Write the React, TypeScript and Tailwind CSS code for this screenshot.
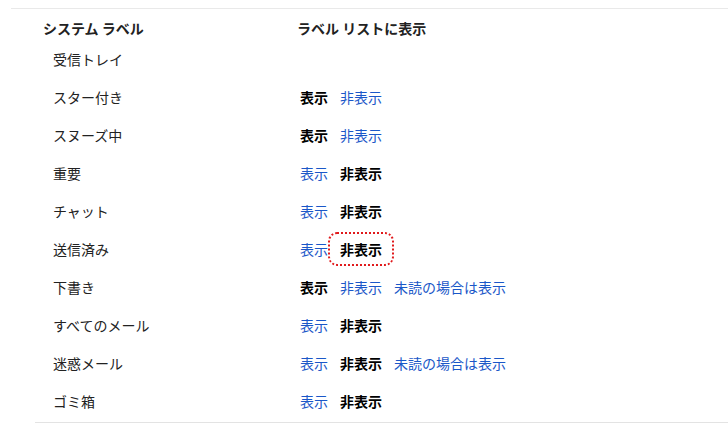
import React from 'react';

type Opt = { text: string; active: boolean; focus?: boolean };

const rows: { label: string; opts: Opt[] }[] = [
  { label: '受信トレイ', opts: [] },
  { label: 'スター付き', opts: [{ text: '表示', active: true }, { text: '非表示', active: false }] },
  { label: 'スヌーズ中', opts: [{ text: '表示', active: true }, { text: '非表示', active: false }] },
  { label: '重要', opts: [{ text: '表示', active: false }, { text: '非表示', active: true }] },
  { label: 'チャット', opts: [{ text: '表示', active: false }, { text: '非表示', active: true }] },
  { label: '送信済み', opts: [{ text: '表示', active: false }, { text: '非表示', active: true, focus: true }] },
  {
    label: '下書き',
    opts: [
      { text: '表示', active: true },
      { text: '非表示', active: false },
      { text: '未読の場合は表示', active: false },
    ],
  },
  { label: 'すべてのメール', opts: [{ text: '表示', active: false }, { text: '非表示', active: true }] },
  {
    label: '迷惑メール',
    opts: [
      { text: '表示', active: false },
      { text: '非表示', active: true },
      { text: '未読の場合は表示', active: false },
    ],
  },
  { label: 'ゴミ箱', opts: [{ text: '表示', active: false }, { text: '非表示', active: true }] },
];

export default function App() {
  return (
    <div
      className="w-[728px] h-[430px] bg-white pt-[8px] pl-[11px] text-[14px] leading-[16px] text-[#222]"
      style={{ fontFamily: '"Noto Sans CJK JP", "Liberation Sans", sans-serif' }}
    >
      <div className="border-t border-[#e9e9e9]">
        <div className="pl-[24px]">
          <div className="border-b border-[#e3e3e3] pb-[2px]">
            <div className="flex pt-[11px] pb-[4px] font-bold">
              <div className="w-[262px] pl-[8px]">システム ラベル</div>
              <div>ラベル リストに表示</div>
            </div>
            {rows.map((row, i) => (
              <div key={i} className="flex items-center h-[38px]">
                <div className="w-[265px] pl-[18px]">{row.label}</div>
                <div className="flex items-center gap-[12px]">
                  {row.opts.map((o, j) =>
                    o.active ? (
                      <span
                        key={j}
                        className={
                          o.focus
                            ? 'font-bold text-black -mx-[10px] px-[10px] py-[7px] rounded-[7px] outline-2 outline-dotted outline-[#e0191b]'
                            : 'font-bold text-black'
                        }
                      >
                        {o.text}
                      </span>
                    ) : (
                      <span key={j} className="text-[#1a57c8]">
                        {o.text}
                      </span>
                    )
                  )}
                </div>
              </div>
            ))}
          </div>
        </div>
      </div>
    </div>
  );
}
